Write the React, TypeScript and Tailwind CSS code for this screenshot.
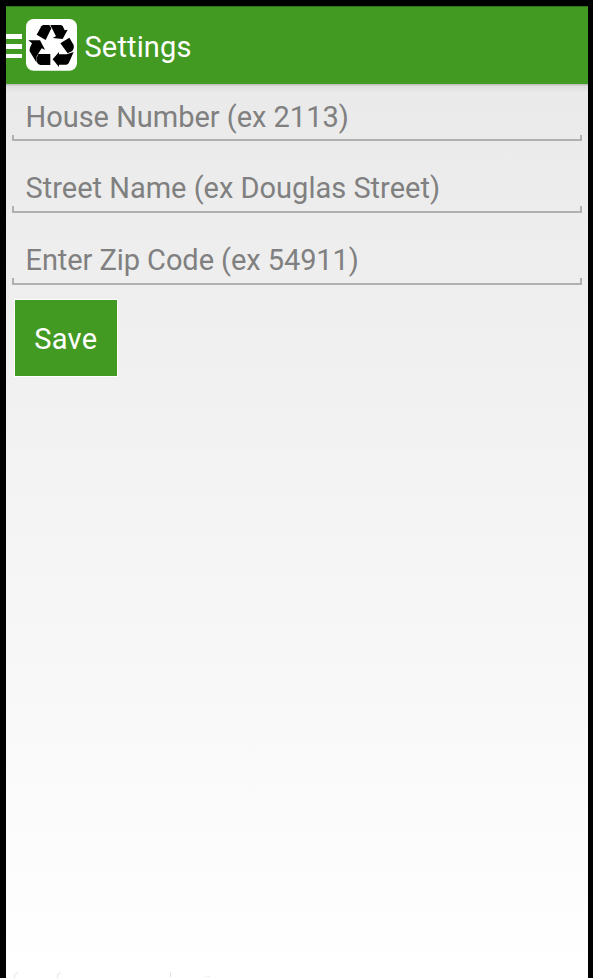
const hints = [
  { text: 'House Number (ex 2113)', row: 'h-[49px]', rule: 'h-[6px]', spacing: 'tracking-[-0.02px]' },
  { text: 'Street Name (ex Douglas Street)', row: 'h-[72px]', rule: 'h-[7px]', spacing: 'tracking-[0px]' },
  { text: 'Enter Zip Code (ex 54911)', row: 'h-[72px]', rule: 'h-[7px]', spacing: 'tracking-[-0.07px]' },
];

function RecycleIcon() {
  return (
    <svg className="mb-0.5 h-[52px] w-[51px] shrink-0" viewBox="6 9 153 156">
      <rect x="6" y="9" width="153" height="155" rx="23" fill="#fff" />
      <g fill="#000">
        <path d="M57 27H76L82 37L65 72L38 56L52 31Z" />
        <path d="M79 27H111L116 30L122 43L131 41L116 69L86 66L96 61Z" />
        <path d="M136 65L149 87Q152 96 145 105L131 112L109 82Z" />
        <path d="M86 130L105 108V115H128L149 108L134 142L128 146H105V153Z" />
        <path d="M43 114H79V147H49Q42 146 38 137V125Z" />
        <path d="M13 73H48L63 101L53 97L38 121L37 139L17 106Q15 99 24 82Z" />
      </g>
    </svg>
  );
}

export default function App() {
  return (
    <div className="h-[978px] w-[593px] overflow-hidden bg-black pl-1.5 pr-[5px] pt-1.5 font-[Roboto,sans-serif]">
      <div className="flex h-full flex-col bg-linear-to-b from-[#e8e8e8] to-white">
        <header className="flex h-[78px] shrink-0 items-center border-t border-[#31731a] bg-[#429a22] text-white">
          <div className="mr-1 flex w-4 flex-col gap-[5px]">
            <span className="h-[5px] bg-white" />
            <span className="h-[5px] bg-white" />
            <span className="h-1 bg-white" />
          </div>
          <RecycleIcon />
          <h1 className="ml-[7.5px] whitespace-nowrap pt-0.5 text-[29px] leading-8 tracking-[0.15px]">Settings</h1>
        </header>
        <div className="h-2 shrink-0 bg-linear-to-b from-[#b8b8b8] via-[#dedede] via-30% to-[#e9e9e9]" />
        <main className="flex flex-col px-1.5">
          {hints.map((hint) => (
            <div key={hint.text} className={`flex flex-col justify-end ${hint.row}`}>
              <div className={`whitespace-nowrap pl-[13.5px] text-[29px] leading-9 text-[#808080] ${hint.spacing}`}>{hint.text}</div>
              <div className={`border-x-2 border-b-2 border-[#b0b0b0] ${hint.rule}`} />
            </div>
          ))}
          <button className="ml-[2px] mt-[14px] h-[78px] w-[103.5px] border border-white bg-[#429a22] pt-1 text-[29px] tracking-[0.3px] text-white">Save</button>
        </main>
        <svg className="mt-auto h-[7px] w-[300px] shrink-0" viewBox="0 0 300 7" fill="none" stroke="#e4e4e4">
          <path d="M8.5 7V4Q8.5 2 12 2M51.5 7V4Q51.5 2 55 2M164.5 1V6" />
          <path d="M199 6Q201 4 204 6" stroke="#eee" />
        </svg>
      </div>
    </div>
  );
}
